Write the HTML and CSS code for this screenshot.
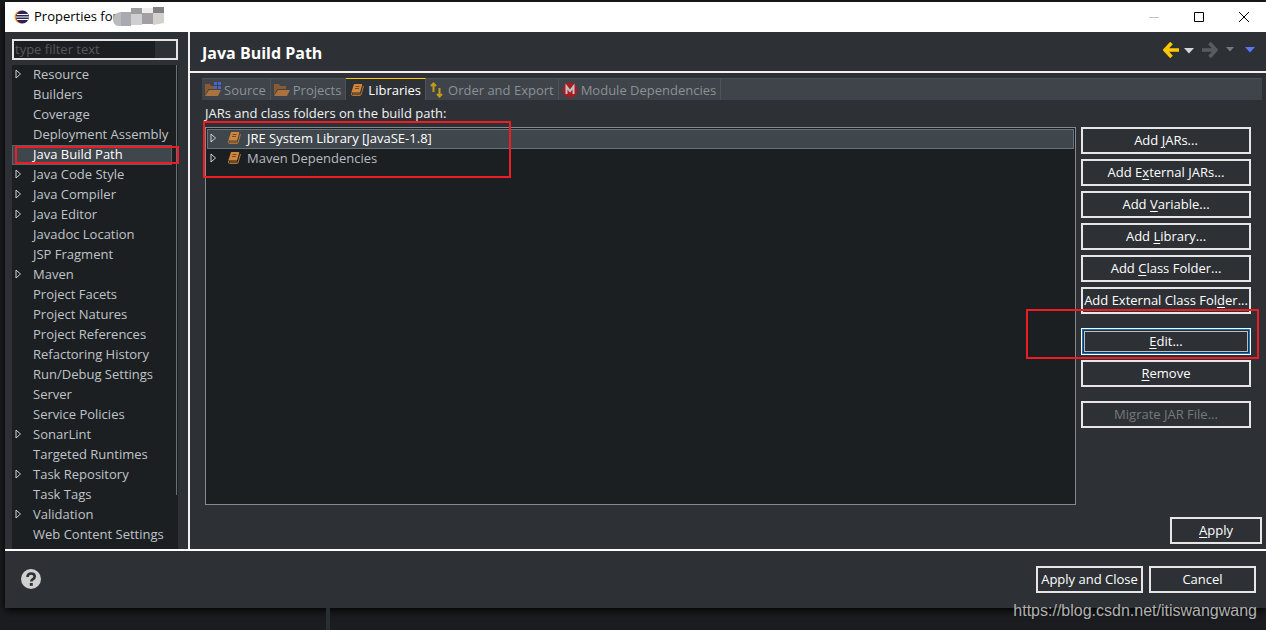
FILE: index.html
```
<!DOCTYPE html>
<html lang="en">
<head>
<meta charset="utf-8">
<title>Properties</title>
<link rel="stylesheet" href="styles.css">
</head>
<body>
<svg class="defs" aria-hidden="true">
  <symbol id="tri" viewBox="0 0 7 10"><path d="M1 1v8l4.500-4z" fill="none" stroke="currentColor"/></symbol>
  <symbol id="book" viewBox="0 0 16 16"><path d="M5.500 2h7q1 0 .7 1l-2.200 7.500H2.300L4.700 3q.2-1 .8-1z" fill="#cf8640"/><path d="M6.500 4.500h4M6 6.500h4" stroke="#7b4a1e"/><path d="M2.500 11q-.5 2.500 1 2.500h7.500q1 0 1.300-1.500L14.500 4M3.500 12h8" fill="none" stroke="#b8712f"/></symbol>
  <symbol id="folder" viewBox="0 0 16 16"><path d="M0 2h5l1 2h6v3H3.500L0 13z" fill="#8a5a33"/><path d="M4 8h12l-3 6H0z" fill="#a8733f"/></symbol>
  <symbol id="down" viewBox="0 0 10 6"><path d="M0 0h10L5 5.500z" fill="currentColor"/></symbol>
  <symbol id="arrow" viewBox="0 0 16 16"><path d="M8.500 1 2 8l6.500 7M2 8h14" fill="none" stroke="currentColor" stroke-width="3.600"/></symbol>
</svg>
<div class="window">
  <header class="titlebar">
    <svg class="logo" viewBox="0 0 16 16"><circle cx="7" cy="8" r="6.500" fill="#f0932b"/><circle cx="8.500" cy="8" r="6.500" fill="#2c2255"/><path d="M3 5.500h11M2 8h13M3 10.500h11" stroke="#fff" stroke-width="1.200"/></svg>
    <span class="caption">Properties for</span>
    <svg class="mosaic" viewBox="0 0 52 20"><path d="M0 12q0-6 8-7v14Q0 20 0 12z" fill="#b9babf"/><path d="M8 5h10v14H8z" fill="#a9a9b0"/><path d="M18 1h11v6H18z" fill="#9d9da0"/><path d="M18 7h11v11H18z" fill="#cfcfd2"/><path d="M29 1h11v5H29z" fill="#eeecef"/><path d="M29 6h11v11H29z" fill="#a29fa3"/><path d="M40 0h11v6H40z" fill="#828284"/><path d="M40 6h11v10l-11 2z" fill="#d4d0cc"/></svg>
    <div class="wincontrols">
      <button class="winbtn" aria-label="Minimize"><svg viewBox="0 0 12 12"><path d="M1 6.500h10" stroke="#c4c4c4"/></svg></button>
      <button class="winbtn" aria-label="Maximize"><svg viewBox="0 0 12 12"><path d="M1.500 1.500h9v9h-9z" fill="none" stroke="#000"/></svg></button>
      <button class="winbtn" aria-label="Close"><svg viewBox="0 0 12 12"><path d="m1 1 10 10M11 1 1 11" stroke="#000"/></svg></button>
    </div>
  </header>
  <div class="main">
    <aside class="sidebar">
      <input class="filter" type="text" placeholder="type filter text" aria-label="Filter">
      <div class="treebox">
        <ul class="tree">
          <li><svg><use href="#tri"/></svg>Resource</li>
          <li>Builders</li>
          <li>Coverage</li>
          <li>Deployment Assembly</li>
          <li class="current">Java Build Path<i class="mark mark-nav"></i></li>
          <li><svg><use href="#tri"/></svg>Java Code Style</li>
          <li><svg><use href="#tri"/></svg>Java Compiler</li>
          <li><svg><use href="#tri"/></svg>Java Editor</li>
          <li>Javadoc Location</li>
          <li>JSP Fragment</li>
          <li><svg><use href="#tri"/></svg>Maven</li>
          <li>Project Facets</li>
          <li>Project Natures</li>
          <li>Project References</li>
          <li>Refactoring History</li>
          <li>Run/Debug Settings</li>
          <li>Server</li>
          <li>Service Policies</li>
          <li><svg><use href="#tri"/></svg>SonarLint</li>
          <li>Targeted Runtimes</li>
          <li><svg><use href="#tri"/></svg>Task Repository</li>
          <li>Task Tags</li>
          <li><svg><use href="#tri"/></svg>Validation</li>
          <li>Web Content Settings</li>
        </ul>
        <div class="scroll"></div>
      </div>
    </aside>
    <section class="page">
      <div class="pagehead">
        <h1>Java Build Path</h1>
        <div class="history">
          <button class="tool back" aria-label="Back"><svg class="arrow"><use href="#arrow"/></svg></button>
          <button class="tool light" aria-label="Back history"><svg class="down"><use href="#down"/></svg></button>
          <button class="tool forward" aria-label="Forward"><svg class="arrow"><use href="#arrow"/></svg></button>
          <button class="tool dim" aria-label="Forward history"><svg class="down small"><use href="#down"/></svg></button>
          <button class="tool blue" aria-label="Menu"><svg class="down"><use href="#down"/></svg></button>
        </div>
      </div>
      <div class="tabs" role="tablist">
        <button class="tab" role="tab"><svg><use href="#folder"/><path d="M9 0h3v3H9zM13 0h3v3h-3zM9 4h3v3H9zM13 4h3v3h-3z" fill="#4c64c8"/></svg>Source</button>
        <button class="tab" role="tab"><svg><use href="#folder"/></svg>Projects</button>
        <button class="tab active" role="tab" aria-selected="true"><svg><use href="#book"/></svg>Libraries</button>
        <button class="tab" role="tab"><svg><path d="M4.500 10V1.500M2 4 4.500 1.500 7 4M10.500 6v8.500M8 12l2.500 2.500 2.500-2.500" fill="none" stroke="#c39b18" stroke-width="2"/></svg>Order and Export</button>
        <button class="tab" role="tab"><svg><circle cx="8" cy="8" r="7.500" fill="#a81c20"/><path d="M4.500 12V4.500L8 9l3.500-4.500V12" fill="none" stroke="#bfc3c6" stroke-width="2"/></svg>Module Dependencies</button>
      </div>
      <div class="content">
        <div class="label" id="liblabel">JARs and class folders on the build path:</div>
        <div class="columns">
          <div class="libbox">
            <ul class="libs" aria-labelledby="liblabel">
              <li class="picked"><svg class="tri"><use href="#tri"/></svg><svg class="book"><use href="#book"/></svg>JRE System Library [JavaSE-1.8]</li>
              <li><svg class="tri"><use href="#tri"/></svg><svg class="book"><use href="#book"/></svg>Maven Dependencies</li>
            </ul>
            <i class="mark mark-libs"></i>
          </div>
          <div class="actions">
            <button class="btn">Add <u>J</u>ARs...</button>
            <button class="btn">Add E<u>x</u>ternal JARs...</button>
            <button class="btn">Add <u>V</u>ariable...</button>
            <button class="btn">Add <u>L</u>ibrary...</button>
            <button class="btn">Add <u>C</u>lass Folder...</button>
            <button class="btn">Add External Class Fol<u>d</u>er...</button>
            <div class="editrow"><button class="btn focused"><u>E</u>dit...</button><i class="mark mark-edit"></i></div>
            <button class="btn"><u>R</u>emove</button>
            <button class="btn migrate" disabled>Migrate JAR File...</button>
          </div>
        </div>
      </div>
      <div class="applyrow"><button class="btn apply"><u>A</u>pply</button></div>
    </section>
  </div>
  <footer class="footer">
    <button class="help" aria-label="Help"><svg viewBox="0 0 20 20"><circle cx="10" cy="10" r="10" fill="#d0d0d0"/><path d="M6.500 8q0-3.500 3.700-3.500 3.500 0 3.500 3 0 1.500-1.700 2.700-1.700 1-1.700 2.300" fill="none" stroke="#2d3135" stroke-width="2.600"/><path d="M8.800 14h3v2.800h-3z" fill="#2d3135"/></svg></button>
    <button class="btn wide">Apply and Close</button>
    <button class="btn wide">Cancel</button>
  </footer>
</div>
<div class="behind"></div>
<div class="watermark">https://blog.csdn.net/itiswangwang</div>
</body>
</html>
```
FILE: styles.css
```
* { box-sizing: border-box; }
body {
  margin: 0;
  padding: 2px 0 0 5px;
  height: 100vh;
  min-height: 600px;
  display: flex;
  flex-direction: column;
  overflow: hidden;
  position: relative;
  background: #1a1c1f;
  color: #c0c4c8;
  font: 13px/18px "Open Sans", "Noto Sans", sans-serif;
}
button { font: inherit; color: inherit; padding: 0; border: 0; background: none; }
ul { list-style: none; margin: 0; padding: 0; }
svg { display: block; flex: none; }
u { text-underline-offset: 2px; }
.defs { position: absolute; width: 0; height: 0; }
.window { flex: 1; display: flex; flex-direction: column; min-height: 0; background: #2d3135; box-shadow: 0 2px 8px #000; }

.titlebar { height: 30px; flex: none; display: flex; align-items: center; padding-left: 9px; background: #fff; color: #000; }
.logo { width: 16px; height: 16px; margin-right: 4px; }
.caption { padding-bottom: 2px; }
.mosaic { width: 52px; height: 20px; margin-left: -5px; }
.wincontrols { margin-left: auto; display: flex; }
.winbtn { width: 45px; height: 28px; display: grid; place-items: center; }
.winbtn svg { width: 12px; height: 12px; }

.main { flex: 1; display: flex; min-height: 0; border-bottom: 2px solid #fff; }
.sidebar { width: 185px; flex: none; display: flex; flex-direction: column; padding: 7px 10px 0 7px; border-right: 2px solid #f4f0f2; }
.filter { width: 100%; height: 21px; padding: 0 1px 2px; border: 2px solid #e4e4e4; border-radius: 0; background: linear-gradient(#1c1f22, #1c1f22) 0 0 / 141px 100% no-repeat #2d3135; color: #c0c4c8; font: inherit; outline: 0; }
.filter::placeholder { color: #55595c; opacity: 1; }
.treebox { flex: 1; display: flex; margin-top: 5px; min-height: 0; background: #1b1f22; }
.tree { flex: 1; }
.tree li { position: relative; height: 20px; padding-left: 21px; white-space: nowrap; }
.tree svg { position: absolute; left: 3px; top: 4px; width: 7px; height: 10px; color: #d0d4d8; }
.tree .current { background: #3f464c; color: #fff; border: 1px solid #596269; line-height: 16px; padding-left: 20px; margin-right: 4px; }
.scroll { width: 2px; height: 430px; border-left: 1px solid #64707a; }

.mark { position: absolute; border: 2px solid #ee1c24; pointer-events: none; }
.mark-nav { left: 2px; top: 0; width: 164px; height: 18px; }
.mark-libs { left: -2px; top: -6px; width: 308px; height: 57px; }
.mark-edit { left: -55px; top: -19px; right: -8px; bottom: -4px; }

.page { flex: 1; min-width: 0; display: flex; flex-direction: column; }
.pagehead { height: 41px; flex: none; display: flex; align-items: center; justify-content: space-between; padding: 2px 11px 0 12px; border-bottom: 2px solid #f4f0f2; }
h1 { margin: 0; font-size: 16px; line-height: 20px; color: #fff; }
.history { display: flex; align-items: center; gap: 5px; padding-bottom: 6px; }
.arrow { width: 16px; height: 16px; }
.down { width: 10px; height: 6px; }
.down.small { width: 8px; height: 5px; }
.back { color: #ffc800; }
.light { color: #d4d8dc; padding-top: 2px; }
.forward { color: #575c63; margin-left: 3px; }
.forward svg { transform: scaleX(-1); }
.dim { color: #75797d; margin-left: 3px; }
.blue { color: #5578ff; margin-left: 6px; }

.tabs { flex: none; height: 22px; display: flex; margin: 5px 4px 0 12px; background: #3e444a; border-top: 1px solid #4d5358; }
.tab { display: flex; align-items: center; gap: 3px; margin-top: -1px; padding: 2px 4px 0 3px; color: #8c9195; border-right: 1px solid #4d5358; white-space: nowrap; }
.tab svg { width: 16px; height: 16px; }
.tab.active { background: #2d3135; color: #fff; border-top: 1px solid #ffc800; padding-top: 1px; }

.content { flex: 1; min-height: 0; display: flex; flex-direction: column; padding: 4px 15px 0; }
.label { color: #f0f2f4; margin-bottom: 5px; }
.columns { flex: 1; display: flex; gap: 5px; }
.libbox { position: relative; flex: 1; display: flex; }
.libs { flex: 1; padding: 1px; border: 1px solid #858a8f; background: #1b1f22; }
.libs li { display: flex; align-items: center; height: 20px; padding: 0 0 2px 3px; color: #b8bcc0; }
.libs .picked { background: #3f464c; border: 1px solid #68737c; color: #fff; padding-left: 2px; }
.libs .tri { width: 7px; height: 10px; color: #d0d4d8; margin-right: 9px; }
.libs .book { width: 16px; height: 16px; margin-right: 5px; }
.actions { width: 170px; display: flex; flex-direction: column; gap: 5px; }
.btn { height: 27px; padding-bottom: 2px; border: 2px solid #e6e6e6; color: #fff; white-space: nowrap; }
.btn:disabled { color: #75797c; }
.editrow { position: relative; display: grid; margin-top: 9px; }
.focused { border: 1px solid #fff; outline: 1px solid #0078d7; outline-offset: -2px; box-shadow: inset 0 0 0 2px #2d3135, inset 0 0 0 3px #bfbfbf; }
.migrate { margin-top: 9px; }
.applyrow { display: flex; justify-content: flex-end; padding: 12px 4px 5px; }
.apply { width: 92px; }

.footer { flex: none; height: 57px; display: flex; align-items: center; gap: 6px; padding: 0 10px 0 16px; }
.help { margin-right: auto; padding-bottom: 1px; }
.help svg { width: 20px; height: 20px; }
.wide { width: 107px; }
.behind { height: 22px; flex: none; width: 325px; border-right: 4px solid #2b2e32; }
.watermark { position: absolute; right: 9px; bottom: 9px; color: #b0b0b0; font: 16px/20px "Liberation Sans", sans-serif; }
```
